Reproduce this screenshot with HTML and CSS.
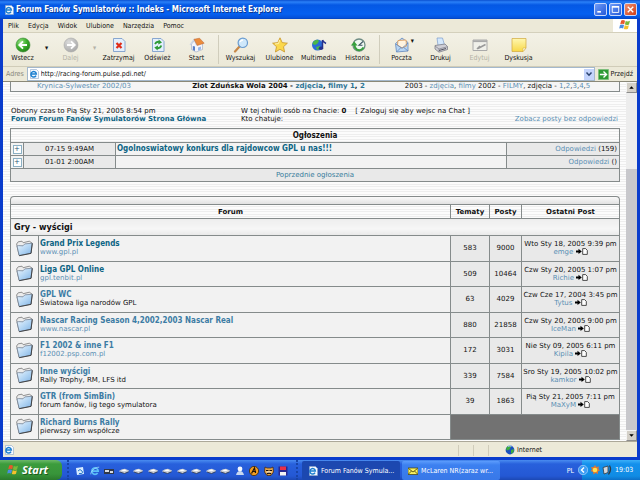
FILE: index.html
```html
<!DOCTYPE html>
<html lang="pl">
<head>
<meta charset="utf-8">
<title>Forum Fanów Symulatorów :: Indeks</title>
<link rel="stylesheet" href="styles.css">
</head>
<body>
<svg class="defs" aria-hidden="true">
  <defs>
    <linearGradient id="g-folder" x1="0" y1="0" x2="1" y2="1"><stop offset="0" stop-color="#eef6fd"/><stop offset=".5" stop-color="#b4d6f4"/><stop offset="1" stop-color="#7fb2e4"/></linearGradient>
    <radialGradient id="g-green" cx=".35" cy=".3" r=".8"><stop offset="0" stop-color="#9be08a"/><stop offset=".5" stop-color="#3fb02e"/><stop offset="1" stop-color="#1c7a14"/></radialGradient>
    <radialGradient id="g-grey" cx=".35" cy=".3" r=".8"><stop offset="0" stop-color="#dcdcdc"/><stop offset="1" stop-color="#a4a4a4"/></radialGradient>
    <linearGradient id="g-note" x1="0" y1="0" x2="0" y2="1"><stop offset="0" stop-color="#fff7b0"/><stop offset="1" stop-color="#f8d848"/></linearGradient>
    <symbol id="folder" viewBox="0 0 17 17">
      <path d="M.6 4 2.200 1.800 6 1.200 7.200 2.700 13.300 1.200 16 3 15 13 3 15Z" fill="#ececec" stroke="#777" stroke-width=".8"/>
      <path d="M1 6 2.500 5.600 7 5.800 8.800 3.900 16.200 3.200 15 13.200 3.200 15.600Z" fill="url(#g-folder)" stroke="#66758a" stroke-width=".7"/>
      <path d="M3.200 15.700 15 13.400 16.300 3.400" fill="none" stroke="#3c3c3c" stroke-width=".9"/>
    </symbol>
    <symbol id="last" viewBox="0 0 12 7">
      <path d="M0 2.4H2.5V.8L5.8 3.4 2.5 6V4.4H0Z" fill="#000"/>
      <path d="M6.7.6H9.6L11.3 2.3V6.4H6.7Z" fill="#fff" stroke="#222" stroke-width=".8"/>
    </symbol>
    <symbol id="ie" viewBox="0 0 10 10">
      <path d="M1.5.5H7.5L9.5 2.5V9.5H1.5Z" fill="#f4f8ff" stroke="#8ba6c8" stroke-width=".6"/>
      <path d="M7 6.6A2.7 2.7 0 1 1 7.3 5H2.6" fill="none" stroke="#1b7fd0" stroke-width="1.5"/>
    </symbol>
    <symbol id="iebig" viewBox="0 0 10 10">
      <path d="M7.6 7A3.2 3.2 0 1 1 8.2 5.2H2.5" fill="none" stroke="#5cc0f8" stroke-width="1.7"/>
      <path d="M.8 8.4C.2 6 5 1 9.2 1.2" fill="none" stroke="#9fdcff" stroke-width=".8"/>
    </symbol>
    <symbol id="flag" viewBox="0 0 12 12">
      <path d="M2.2 1.6Q4 .6 6 1.7L5.2 5.2Q3.2 4.2 1.2 5.2Z" fill="#e8582c"/>
      <path d="M6.7 2Q8.8 3 11 1.8L10 5.4Q8 6.4 5.900 5.5Z" fill="#7cb938"/>
      <path d="M1 6Q3 5 5 6L4.2 9.6Q2.2 8.6.2 9.6Z" fill="#4b8ce0"/>
      <path d="M5.7 6.3Q7.8 7.2 9.8 6.2L9 9.8Q7 10.8 4.9 9.9Z" fill="#f6c02c"/>
    </symbol>
    <symbol id="car" viewBox="0 0 10 10">
      <path d="M0 5 3 3.200 6 2.800 10 4.600 9.600 5.600 5.500 7.400 1 6Z" fill="#c8ccd4"/>
      <path d="M2 4.600 5.500 3.400 8 4.400 5 5.200Z" fill="#fff"/><path d="M1 6 5.500 7.500 9.600 5.800" fill="none" stroke="#30384c" stroke-width=".8"/>
    </symbol>
    <symbol id="globe" viewBox="0 0 10 10">
      <circle cx="5" cy="5" r="4.4" fill="#1a4fc0"/><path d="M2 2Q5 0 6 2L4.500 4.500 2 5.500 1 4ZM6 5 9 4 8.500 7 6 9Z" fill="#3fae3a"/><path d="M3 1.300Q5 .5 6.500 1.300" stroke="#bcd8ff" fill="none"/>
    </symbol>
  </defs>
</svg>

<div class="window">
  <header class="titlebar">
    <svg class="i10"><use href="#ie"/></svg>
    <h1>Forum Fanów Symulatorów :: Indeks - Microsoft Internet Explorer</h1>
    <div class="caption">
      <button aria-label="Minimalizuj"><svg viewBox="0 0 12 12"><path d="M2.500 8.500H6.500" stroke="#fff" stroke-width="1.800"/></svg></button>
      <button aria-label="Maksymalizuj"><svg viewBox="0 0 12 12"><path d="M2.500 3.200H9.500V9.200H2.500Z" fill="none" stroke="#fff"/><path d="M2 3H10" stroke="#fff" stroke-width="1.600"/></svg></button>
      <button class="close" aria-label="Zamknij"><svg viewBox="0 0 12 12"><path d="M3 3 9 9M9 3 3 9" stroke="#fff" stroke-width="1.500"/></svg></button>
    </div>
  </header>

  <nav class="menubar">
    <button>Plik</button><button>Edycja</button><button>Widok</button><button>Ulubione</button><button>Narzędzia</button><button>Pomoc</button>
    <span class="brand"><svg class="i12"><use href="#flag"/></svg></span>
  </nav>

  <div class="toolbar">
    <button class="tool"><svg viewBox="0 0 16 16"><circle cx="8" cy="8" r="7" fill="url(#g-green)" stroke="#3a8a34" stroke-width=".6"/><path d="M12 8H4.800M8 4.300 4.300 8 8 11.700" fill="none" stroke="#fff" stroke-width="1.900"/></svg>Wstecz</button>
    <span class="drop">▾</span>
    <button class="tool" disabled><svg viewBox="0 0 16 16"><circle cx="8" cy="8" r="7" fill="url(#g-grey)" stroke="#aaa" stroke-width=".6"/><path d="M4 8H11.200M8 4.300 11.700 8 8 11.700" fill="none" stroke="#fff" stroke-width="1.900"/></svg>Dalej</button>
    <span class="drop off">▾</span>
    <button class="tool"><svg viewBox="0 0 16 16"><path d="M2.500 1.500H11L14 4.500V14.500H2.500Z" fill="#e4effc" stroke="#6f94c8" stroke-width=".8"/><path d="M5.500 6 10.500 11M10.500 6 5.500 11" stroke="#e02c18" stroke-width="2.200"/></svg>Zatrzymaj</button>
    <button class="tool"><svg viewBox="0 0 16 16"><path d="M2.500 1.500H11L14 4.500V14.500H2.500Z" fill="#e4effc" stroke="#6f94c8" stroke-width=".8"/><path d="M5 7Q6.500 4 9.500 5M11.300 8.500Q10 12 6.500 11" fill="none" stroke="#2c9a34" stroke-width="1.800"/><path d="M8.700 2.500 12 5.600 8.200 7.400ZM7.600 13.500 4.300 10.500 8 8.600Z" fill="#2c9a34"/></svg>Odśwież</button>
    <button class="tool"><svg viewBox="0 0 16 16"><path d="M2.500 7 6 3 13.500 5.500V12.500L7 15 2.500 12.500Z" fill="#f4f4fa" stroke="#9aa6c0" stroke-width=".6"/><path d="M1 8 5 2.500 7.800 8.600" fill="none" stroke="#c8d4ea" stroke-width="1.200"/><path d="M5 2.300 10.500 1.200 15.200 6.200 8.300 8.500Z" fill="#ec8c3c" stroke="#b8602c" stroke-width=".5"/><path d="M3.800 9 6 9.600V14L3.800 13Z" fill="#5a80c8"/><path d="M9 10.500 12 9.500V12.500L9 13.700Z" fill="#98b8ec"/></svg>Start</button>
    <span class="rule"></span>
    <button class="tool"><svg viewBox="0 0 16 16"><path d="M2 14.500 6.500 9.500" stroke="#c88848" stroke-width="2.200" stroke-linecap="round"/><circle cx="9.800" cy="5.800" r="4.700" fill="#cfe8fb" stroke="#6a9cd0" stroke-width="1.200"/><path d="M7 5Q8 3 10 3" fill="none" stroke="#fff" stroke-width="1.300"/></svg>Wyszukaj</button>
    <button class="tool"><svg viewBox="0 0 16 16"><path d="M8 .8 10.200 5.600 15.400 6.200 11.500 9.700 12.600 15 8 12.300 3.400 15 4.500 9.700.6 6.200 5.800 5.600Z" fill="#fbd84c" stroke="#c8962c" stroke-width=".8"/><path d="M7.700 3 6.500 6.600 3 7" fill="none" stroke="#fff3b0"/></svg>Ulubione</button>
    <button class="tool"><svg viewBox="0 0 16 16"><circle cx="6.500" cy="8" r="5.500" fill="#2c6cd8"/><path d="M2.500 4.500Q6 1.500 8 4L6.500 6.500 4 8 1.500 7ZM5 10 9 9 9 12 6 13Z" fill="#4cb848"/><path d="M11.500 3V11M11.500 3Q12 5 15 6.500" stroke="#25308c" stroke-width="1.500" fill="none"/><ellipse cx="10" cy="11.200" rx="2.200" ry="1.700" fill="#25308c"/></svg>Multimedia</button>
    <button class="tool"><svg viewBox="0 0 16 16"><circle cx="9" cy="8" r="6" fill="#eef8f0" stroke="#6f8c84" stroke-width="1.300"/><path d="M13 4.500 9 8.200H12.500" fill="none" stroke="#3c5060" stroke-width="1.100"/><path d="M13.500 10.500Q11 14.500 7 12.700 4.500 11 4.500 8" fill="none" stroke="#36a03c" stroke-width="2"/><path d="M.8 8.500 4.300 4.500 7.500 8.500Z" fill="#36a03c"/></svg>Historia</button>
    <span class="rule"></span>
    <button class="tool mail"><svg viewBox="0 0 16 16"><path d="M1.500 6.500 8 1 14 5.500V14L2.500 15Z" fill="#b8d6f4" stroke="#6288bc" stroke-width=".8"/><path d="M4 3.500 12 3 12.500 9 8 11 3.500 8Z" fill="#fff4e0" stroke="#e0964c" stroke-width=".8"/><path d="M1.800 7 8 11.300 14 6M2.500 15 7 10.500M14 14 9.500 10.300" fill="none" stroke="#6288bc" stroke-width=".8"/></svg>Poczta<i>▾</i></button>
    <button class="tool"><svg viewBox="0 0 16 16"><path d="M4 1 9.500 1 11.500 8 5 8.500Z" fill="#d4e8fc" stroke="#7c9ccc" stroke-width=".7"/><path d="M2 8.500 12 7 14.500 9.500V12.500L6 15.200 2 12Z" fill="#cfcfd6" stroke="#73737c" stroke-width=".7"/><path d="M2 9 6 12 14.500 9.700M6 12V15" fill="none" stroke="#888892" stroke-width=".8"/><path d="M6 13.500 13 11.500" stroke="#55555f"/></svg>Drukuj</button>
    <button class="tool" disabled><svg viewBox="0 0 16 16"><path d="M1 3H15V13.500H1Z" fill="#f0f0ea" stroke="#aaa" stroke-width="1"/><path d="M1 4.200H15" stroke="#aaa" stroke-width="1.800"/><path d="M6 11.500 13.500 7.500M5 12 8 9" stroke="#999" stroke-width="1.500"/></svg>Edytuj</button>
    <button class="tool"><svg viewBox="0 0 16 16"><path d="M1 1.500H15V11L12 14.500H1Z" fill="url(#g-note)" stroke="#d0a83c" stroke-width=".7"/><path d="M15 11H12V14.500Z" fill="#fffbe0" stroke="#d0a83c" stroke-width=".5"/></svg>Dyskusja</button>
  </div>

  <form class="address">
    <label for="url">Adres</label>
    <div class="urlbox">
      <svg class="i10"><use href="#ie"/></svg>
      <input id="url" type="text" value="http://racing-forum.pulse.pdi.net/">
      <button type="button" class="more" aria-label="Rozwiń"><svg viewBox="0 0 10 10"><path d="M2.500 3.500 5 6.200 7.500 3.500" fill="none" stroke="#2c4470" stroke-width="1.500"/></svg></button>
    </div>
    <button type="button" class="go"><svg viewBox="0 0 12 12"><path d="M.5.5H11.500V11.500H.5Z" fill="#2f9a34" stroke="#7cc07c" stroke-width=".8"/><path d="M2 6H9M6 2.800 9.300 6 6 9.200" fill="none" stroke="#fff" stroke-width="1.500"/></svg>Przejdź</button>
  </form>

  <div class="view">
    <main class="page">
      <section class="links">
        <div><a href="#">Krynica-Sylwester 2002/03</a></div>
        <div class="strong">Zlot Zduńska Wola 2004 - <a href="#">zdjęcia</a>, <a href="#">filmy 1</a>, <a href="#">2</a></div>
        <div class="years">2003 - <a href="#">zdjęcia</a>, <a href="#">filmy</a> 2002 - <a href="#">FILMY</a>, zdjęcia - <a href="#">1</a>,<a href="#">2</a>,<a href="#">3</a>,<a href="#">4</a>,<a href="#">5</a></div>
      </section>

      <section class="info">
        <div>Obecny czas to Pią Sty 21, 2005 8:54 pm<br><a class="home" href="#">Forum Forum Fanów Symulatorów Strona Główna</a></div>
        <div>W tej chwili osób na Chacie: <b>0</b> &nbsp; &nbsp;[ Zaloguj się aby wejsc na Chat ]<br>Kto chatuje:</div>
        <a class="unanswered" href="#">Zobacz posty bez odpowiedzi</a>
      </section>

      <table class="news">
        <colgroup><col class="c-plus"><col class="c-date"><col><col class="c-reply"></colgroup>
        <thead><tr><th colspan="4">Ogłoszenia</th></tr></thead>
        <tbody>
          <tr><td><button class="plus" aria-label="Rozwiń">+</button></td><td class="date">07-15 9:49AM</td><td class="subject"><a href="#">Ogolnoswiatowy konkurs dla rajdowcow GPL u nas!!!</a></td><td class="reply"><a href="#">Odpowiedzi</a> (159)</td></tr>
          <tr><td><button class="plus" aria-label="Rozwiń">+</button></td><td class="date">01-01 2:00AM</td><td class="subject"></td><td class="reply"><a href="#">Odpowiedzi</a> ()</td></tr>
          <tr><td class="older" colspan="4"><a href="#">Poprzednie ogłoszenia</a></td></tr>
        </tbody>
      </table>

      <div class="cap"></div>
      <table class="forum">
        <colgroup><col class="c-icon"><col><col class="c-topics"><col class="c-posts"><col class="c-last"></colgroup>
        <thead>
          <tr class="heads"><th colspan="2">Forum</th><th>Tematy</th><th>Posty</th><th>Ostatni Post</th></tr>
          <tr class="group"><th colspan="5">Gry - wyścigi</th></tr>
        </thead>
        <tbody>
          <tr><td class="ico"><svg><use href="#folder"/></svg></td><td class="name"><a class="seen" href="#">Grand Prix Legends</a><p><a href="#">www.gpl.pl</a></p></td><td>583</td><td>9000</td><td>Wto Sty 18, 2005 9:39 pm<br><a href="#">emge</a> <svg class="last"><use href="#last"/></svg></td></tr>
          <tr><td class="ico"><svg><use href="#folder"/></svg></td><td class="name"><a class="seen" href="#">Liga GPL Online</a><p><a href="#">gpl.tenbit.pl</a></p></td><td>509</td><td>10464</td><td>Czw Sty 20, 2005 1:07 pm<br><a href="#">Richie</a> <svg class="last"><use href="#last"/></svg></td></tr>
          <tr><td class="ico"><svg><use href="#folder"/></svg></td><td class="name"><a href="#">GPL WC</a><p>Światowa liga narodów GPL</p></td><td>63</td><td>4029</td><td>Czw Cze 17, 2004 3:45 pm<br><a href="#">Tytus</a> <svg class="last"><use href="#last"/></svg></td></tr>
          <tr><td class="ico"><svg><use href="#folder"/></svg></td><td class="name"><a href="#">Nascar Racing Season 4,2002,2003 Nascar Real</a><p><a href="#">www.nascar.pl</a></p></td><td>880</td><td>21858</td><td>Czw Sty 20, 2005 9:00 pm<br><a href="#">IceMan</a> <svg class="last"><use href="#last"/></svg></td></tr>
          <tr><td class="ico"><svg><use href="#folder"/></svg></td><td class="name"><a href="#">F1 2002 &amp; inne F1</a><p><a href="#">f12002.psp.com.pl</a></p></td><td>172</td><td>3031</td><td>Nie Sty 09, 2005 6:11 pm<br><a href="#">Kipila</a> <svg class="last"><use href="#last"/></svg></td></tr>
          <tr><td class="ico"><svg><use href="#folder"/></svg></td><td class="name"><a href="#">Inne wyścigi</a><p>Rally Trophy, RM, LFS itd</p></td><td>339</td><td>7584</td><td>Sro Sty 19, 2005 10:02 pm<br><a href="#">kamkor</a> <svg class="last"><use href="#last"/></svg></td></tr>
          <tr><td class="ico"><svg><use href="#folder"/></svg></td><td class="name"><a href="#">GTR (from SimBin)</a><p>forum fanów, lig tego symulatora</p></td><td>39</td><td>1863</td><td>Pią Sty 21, 2005 7:11 pm<br><a href="#">MaXyM</a> <svg class="last"><use href="#last"/></svg></td></tr>
          <tr><td class="ico"><svg><use href="#folder"/></svg></td><td class="name"><a href="#">Richard Burns Rally</a><p>pierwszy sim współcze</p></td><td class="blank" colspan="3"></td></tr>
        </tbody>
      </table>
    </main>
    <div class="scroll">
      <button aria-label="W górę"><svg viewBox="0 0 10 10"><path d="M2.500 6.500 5 3.500 7.500 6.500Z"/></svg></button>
      <div class="track"></div>
      <div class="thumb"></div>
      <button aria-label="W dół"><svg viewBox="0 0 10 10"><path d="M2.500 3.500H7.500L5 6.500Z"/></svg></button>
    </div>
  </div>

  <footer class="status">
    <svg class="i10"><use href="#ie"/></svg>
    <span class="cell first"></span><span class="cell"></span><span class="cell"></span>
    <span class="zone"><svg class="i10"><use href="#globe"/></svg>Internet</span>
  </footer>
</div>

<div class="taskbar">
  <button class="start"><svg class="i12"><use href="#flag"/></svg>Start</button>
  <div class="quick">
    <svg viewBox="0 0 10 10"><path d="M1 2 8 1 9 8 2 9Z" fill="#d8ecff"/><path d="M3 5Q5 2 7 5T4 7.500" stroke="#2878c8" fill="none"/></svg>
    <svg><use href="#iebig"/></svg>
    <svg viewBox="0 0 10 10"><path d="M0 3H10V8H0Z" fill="#303848"/><path d="M1 4H5V6H1ZM6 5H9V7H6Z" fill="#d8dce4"/></svg>
    <svg><use href="#car"/></svg><svg><use href="#car"/></svg><svg><use href="#car"/></svg><svg><use href="#car"/></svg><svg><use href="#car"/></svg><svg><use href="#car"/></svg><svg><use href="#car"/></svg><svg><use href="#car"/></svg>
    <svg viewBox="0 0 10 10"><circle cx="5" cy="3" r="2.400" fill="#f4f8ff"/><path d="M1 9Q2 5 5 5T9 9Z" fill="#c8d8f0"/></svg>
    <svg viewBox="0 0 10 10"><circle cx="5" cy="5" r="4.600" fill="#f09c20" stroke="#402808" stroke-width=".8"/><path d="M2.500 7.500 5.500 2 6.500 7M3.500 5.500H7" stroke="#201408" fill="none" stroke-width="1.200"/></svg>
    <svg viewBox="0 0 10 10"><path d="M1 1 3 2 7 2 9 1 9.500 6 7 9.500H3L.5 6Z" fill="#e8a848" stroke="#382010" stroke-width=".7"/><path d="M2 4.500H4.500M5.500 4.500H8M3 8Q5 6 7 8" stroke="#201008" stroke-width="1.200" fill="none"/><path d="M2.500 6H7.500" stroke="#fff"/></svg>
    <svg viewBox="0 0 10 10"><path d="M.5.5H9.500V9.500H.5Z" fill="#282890"/><path d="M2 .5H8V4H2Z" fill="#e83048"/><path d="M2 6H8V9.500H2Z" fill="#f4f4f4"/></svg>
  </div>
  <div class="tasks">
    <button class="task on"><svg class="i10"><use href="#ie"/></svg>Forum Fanów Symula...</button>
    <button class="task"><svg class="i10" viewBox="0 0 10 10"><path d="M0 2H10V8.500H0Z" fill="#f8f060" stroke="#403c08" stroke-width=".7"/><path d="M.5 2.500 5 6 9.500 2.500M.5 8 3.500 5M9.500 8 6.500 5" stroke="#403c08" stroke-width=".8" fill="none"/></svg>McLaren NR(zaraz wr...</button>
  </div>
  <span class="lang">PL</span>
  <div class="tray">
    <svg class="i10 chev" viewBox="0 0 10 10"><circle cx="5" cy="5" r="4.700" fill="#3c9cf4" stroke="#bfe2ff" stroke-width=".6"/><path d="M6 2.500 3.500 5 6 7.500" stroke="#fff" stroke-width="1.400" fill="none"/></svg>
    <svg class="i10" viewBox="0 0 10 10"><path d="M5 0 6.500 2 9 1.500 8.500 4 10 5.500 8 6.500 8 9 5.500 8 3.500 9.500 3 7 .5 6 2 4.500 1 2 3.500 2Z" fill="#d87838"/><circle cx="5" cy="5" r="2.300" fill="#ffe04c"/></svg>
    <svg class="i10" viewBox="0 0 10 10"><path d="M1 2.500 6 1V7.500L2 9Z" fill="#d4d8dc" stroke="#303840" stroke-width=".8"/><path d="M7.500.5Q10 4.500 6.500 9.500" stroke="#303840" fill="none" stroke-width="1.300"/></svg>
    <time>19:03</time>
  </div>
</div>
</body>
</html>
```
FILE: styles.css
```css
:root {
  --ui: "DejaVu Sans Condensed", "Liberation Sans", sans-serif;
  --web: "DejaVu Sans", sans-serif;
  --line: #858b8b;
  --chrome: #ece9d8;
}
* { box-sizing: border-box; }
body {
  margin: 0;
  height: 100vh;
  display: flex;
  flex-direction: column;
  overflow: hidden;
  font: 7px/8px var(--ui);
  color: #111;
  background: #1c50c8;
  white-space: nowrap;
}
button { margin: 0; padding: 0; border: 0; background: none; font: inherit; color: inherit; }
svg { display: block; flex: none; }
a { color: #5a8fb4; text-decoration: none; }
.defs { position: absolute; width: 0; height: 0; }
.i10 { width: 10px; height: 10px; }
.i12 { width: 12px; height: 12px; }

.window {
  flex: 1;
  min-height: 0;
  display: flex;
  flex-direction: column;
  border: solid #0a3ccc;
  border-width: 0 3px 3px;
}

/* Title bar */
.titlebar {
  height: 19px;
  margin: 0 -3px;
  padding: 0 3px 0 4px;
  display: flex;
  align-items: center;
  gap: 2px;
  background: linear-gradient(#0a50d0, #2a80f8 2px, #0458e4 5px, #0560f0 14px, #0450d8 18px, #0440b8);
}
.titlebar h1 { flex: 1; margin: 0; font: bold 8px/10px var(--ui); color: #fff; text-shadow: 1px 1px #0a3890; }
.caption { display: flex; gap: 2px; }
.caption button { width: 13px; height: 13px; border: 1px solid #c8d8fc; border-radius: 2px; background: linear-gradient(135deg, #6f9cf8, #2458d8); }
.caption .close { background: linear-gradient(135deg, #f09070, #d03c14); }

/* Menu bar */
.menubar { height: 14px; padding-left: 5px; display: flex; gap: 9px; background: var(--chrome); border-bottom: 1px solid #d4d0bc; }
.brand { margin-left: auto; width: 24px; display: flex; justify-content: center; background: #fff; }

/* Toolbar */
.toolbar { height: 34px; display: flex; align-items: stretch; background: linear-gradient(#f3f1e6, #ebe8d7); border-bottom: 1px solid #d0ccb8; }
.tool { width: 39px; display: flex; flex-direction: column; align-items: center; justify-content: center; gap: 1px; position: relative; }
.tool svg { width: 16px; height: 16px; }
.tool:disabled { color: #b4b2a6; }
.tool i { position: absolute; right: 7px; top: 4px; font-style: normal; }
.drop { width: 9px; padding-top: 11px; text-align: center; }
.drop.off { color: #b4b2a6; }
.rule { width: 1px; margin: 2px; background: #d0cdbc; }

/* Address bar */
.address { height: 15px; margin: 0; padding-left: 3px; display: flex; align-items: stretch; gap: 3px; background: var(--chrome); border-bottom: 1px solid #8a8878; }
.address label { color: #8a887c; line-height: 14px; }
.urlbox { flex: 1; display: flex; align-items: center; gap: 2px; padding-left: 1px; background: #fff; border: 1px solid #a4b8cc; }
.urlbox input { flex: 1; min-width: 0; height: 10px; border: 0; padding: 0; background: none; font: inherit; color: #111; outline: 0; }
.more { width: 10px; height: 11px; background: #c4d4fc; }
.go { display: flex; align-items: center; gap: 2px; padding-right: 4px; }
.go svg { width: 11px; height: 11px; }

/* Page viewport */
.view { flex: 1; min-height: 0; display: flex; background: #fff; }
.page {
  flex: 1;
  min-width: 0;
  padding: 0 6px 0 7px;
  overflow: hidden;
  font: 7px/8px var(--web);
  background: repeating-linear-gradient(#fcfcfc 0 2px, #eeeeee 2px 3px, #fcfcfc 3px 4px, #eeeeee 4px 5px);
}
.links {
  height: 10px;
  display: grid;
  grid-template-columns: 24fr 40fr 36fr;
  text-align: center;
  background: #f5f5f5;
  border: 1px solid var(--line);
  border-top: 0;
}
.links .years { padding-right: 24px; }
.links .strong, .strong a { font-weight: bold; }
.strong a { color: #2c7496; }
.info { display: grid; grid-template-columns: 230px 1fr auto; padding: 15px 2px 5px 1px; }
.home { font-weight: bold; color: #0c6484; }
.unanswered { align-self: end; }

table { width: 100%; table-layout: fixed; border-collapse: collapse; border: 1px solid var(--line); }
th, td { padding: 0; border: 1px solid var(--line); }

/* Announcements */
.c-plus { width: 13px; }
.c-date { width: 92px; }
.c-reply { width: 113px; }
.news tr { height: 13px; }
.news thead tr { height: 14px; }
.news th { font: bold 8px/8px var(--ui); }
.news td { background: #f3f3f3; }
.news .date, .news .older, .news .reply { background: #e9e9e9; text-align: center; }
.news .reply { text-align: right; padding-right: 2px; }
.older a { color: #387c9c; }
.news .subject { padding-left: 1px; font: bold 8px/8px var(--ui); }
.subject a { color: #0c6484; }
.plus { display: block; width: 9px; height: 9px; margin: 0 auto; border: 1px solid #8cb0c4; background: #fff; color: #1c5878; line-height: 6px; }

/* Forum list */
.cap { height: 9px; margin-top: 14px; border: 1px solid var(--line); border-bottom: 0; border-radius: 4px 4px 0 0; background: linear-gradient(#fafafa, #dedede); }
.forum { height: 236px; margin-top: -1px; text-align: center; }
.c-icon { width: 28px; }
.c-topics { width: 39px; }
.c-posts { width: 32px; }
.c-last { width: 98px; }
.heads { height: 14px; }
.group { height: 17px; }
.group th { padding-left: 3px; text-align: left; font: bold 9px/10px var(--ui); background: linear-gradient(#eee, #f6f6f6 60%, #e8e8e8); }
.forum td { background: #e9e9e9; }
.forum td.ico, .forum td.name { background: #f2f2f2; }
.ico svg { width: 17px; height: 17px; margin: 0 auto; }
.forum .name { padding-left: 1px; text-align: left; }
.name > a { display: block; font: bold 8px/8px var(--ui); color: #3c7ca4; }
.name > .seen { color: #0c6484; }
.name p { margin: 0; }
.forum td.blank { background: #727272; }
.last { display: inline-block; width: 12px; height: 7px; vertical-align: -1px; }

/* Scroll bar */
.scroll { width: 11px; display: flex; flex-direction: column; }
.scroll button { height: 11px; background: #d4d0c8; border: 1px solid #8c8c8c; border-top-color: #f4f4f4; border-left-color: #f4f4f4; }
.track { flex: 76; background: #ededed; }
.thumb { flex: 262; background: #c8c8cc; }

/* Status bar */
.status { height: 16px; padding: 1px 0 0 1px; display: flex; align-items: center; background: var(--chrome); border-top: 1px solid #aca899; }
.cell { width: 15px; height: 11px; border-left: 1px solid #d0ccba; }
.cell.first { margin-left: auto; }
.zone { width: 134px; display: flex; align-items: center; gap: 2px; padding-left: 2px; }

/* Taskbar */
.taskbar { height: 20px; display: flex; align-items: stretch; color: #fff; background: linear-gradient(#4a8cf0, #2860dc 4px, #2458d4 16px, #1c48b4); }
.start {
  width: 62px;
  display: flex;
  align-items: center;
  gap: 3px;
  padding-left: 7px;
  border-radius: 0 6px 6px 0;
  background: linear-gradient(#6cb868, #3c9c3c 4px, #38943a 14px, #2a7a2c);
  font: italic bold 11px/14px "Open Sans", sans-serif;
  text-shadow: 1px 1px #1c5c1c;
}
.quick { width: 231px; display: flex; align-items: center; justify-content: space-between; padding: 1px 8px 0 6px; margin-left: 5px; border: dotted #1844a8; border-width: 0 2px; }
.quick svg { width: 10px; height: 10px; }
.tasks { flex: 1; display: flex; gap: 2px; padding: 1px 0 0 4px; }
.task { width: 98px; display: flex; align-items: center; gap: 3px; padding-left: 6px; border-radius: 2px; background: linear-gradient(#5c9cfc, #3c80f0 4px, #3878e8); }
.task.on { background: #1c48b0; }
.lang { padding: 7px 8px 0 0; }
.tray { width: 58px; display: flex; align-items: center; gap: 2px; background: linear-gradient(#3cb0f8, #1490ec 4px, #108ce4 16px, #0c70c8); }
.chev { margin-left: -4px; }
.tray time { margin-left: 1px; }
```
